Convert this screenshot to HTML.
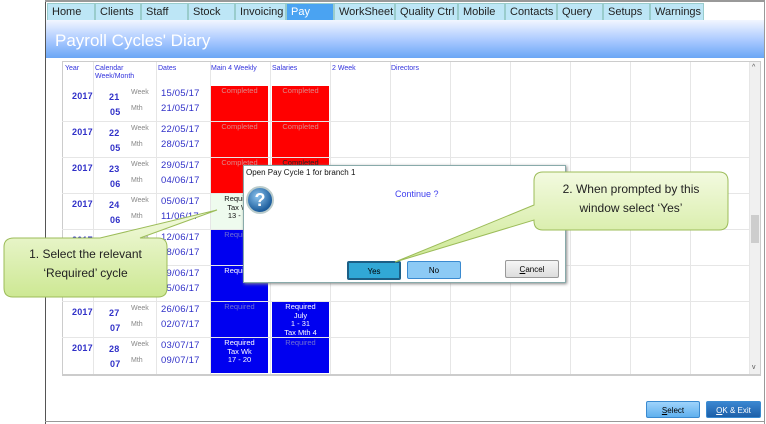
<!DOCTYPE html>
<html><head><style>
*{margin:0;padding:0;box-sizing:border-box}
body{width:766px;height:424px;background:#fff;font-family:"Liberation Sans",sans-serif;position:relative;overflow:hidden}
.a{position:absolute}
.tab{position:absolute;top:3px;height:17px;background:#bde6f6;border:1px solid #9cc;border-bottom:none;font-size:11px;color:#222;padding:2px 0 0 4px;white-space:nowrap;overflow:hidden}
.hdr{left:46px;top:20px;width:718px;height:38px;background:linear-gradient(#f2f6ff,#a8c8ff 55%,#6aa6f5);}
.t{font-size:7px;color:#3333dd}
.g{font-size:7px;color:#888}
.d{font-size:9.5px;color:#3030c8;letter-spacing:0.2px}
.vl{position:absolute;top:62px;width:1px;height:312px;background:#e6e6e6}
.hl{position:absolute;left:62px;width:688px;height:1px;background:#e6e6e6}
.cell{position:absolute;font-size:7.5px;text-align:center;line-height:8.5px;padding-top:1px}
.red{background:#ff0000;color:#d88}
.blue{background:#0000f0;color:#7070d0}
.bw{color:#fff}
.btn{position:absolute;font-size:8px;text-align:center;line-height:17px;border:1px solid #3a8ad0;border-radius:2px}
</style></head><body>
<div class="a" style="left:45px;top:0;width:1px;height:424px;background:#555"></div>
<div class="a" style="left:764px;top:0;width:1px;height:424px;background:#999"></div>
<div class="a" style="left:45px;top:421px;width:720px;height:1px;background:#999"></div>
<div class="a" style="left:45px;top:0;width:720px;height:2px;background:#999"></div>
<div class="tab" style="left:47px;width:48px">Home</div>
<div class="tab" style="left:95px;width:46px">Clients</div>
<div class="tab" style="left:141px;width:47px">Staff</div>
<div class="tab" style="left:188px;width:47px">Stock</div>
<div class="tab" style="left:235px;width:51px">Invoicing</div>
<div class="tab" style="left:286px;width:48px;background:#4aa3f2;color:#fff">Pay</div>
<div class="tab" style="left:334px;width:61px">WorkSheet</div>
<div class="tab" style="left:395px;width:63px">Quality Ctrl</div>
<div class="tab" style="left:458px;width:47px">Mobile</div>
<div class="tab" style="left:505px;width:52px">Contacts</div>
<div class="tab" style="left:557px;width:46px">Query</div>
<div class="tab" style="left:603px;width:47px">Setups</div>
<div class="tab" style="left:650px;width:54px">Warnings</div>
<div class="a hdr"></div>
<div class="a" style="left:55px;top:31px;font-size:17px;color:#fff">Payroll Cycles' Diary</div>
<div class="a" style="left:62px;top:61px;width:699px;height:315px;border:1px solid #ccc;border-bottom:2px solid #ccc"></div>
<div class="a" style="left:750px;top:62px;width:10px;height:312px;background:#f0f0f0"></div>
<div class="a" style="left:751px;top:215px;width:8px;height:28px;background:#cdcdcd"></div>
<div class="a" style="left:752px;top:64px;font-size:7px;color:#555">^</div>
<div class="a" style="left:752px;top:364px;font-size:7px;color:#555">v</div>
<div class="vl" style="left:93px"></div><div class="vl" style="left:156px"></div><div class="vl" style="left:210px"></div><div class="vl" style="left:270px"></div><div class="vl" style="left:330px"></div><div class="vl" style="left:390px"></div><div class="vl" style="left:450px"></div><div class="vl" style="left:510px"></div><div class="vl" style="left:570px"></div><div class="vl" style="left:630px"></div><div class="vl" style="left:690px"></div><div class="vl" style="left:749px"></div>
<div class="hl" style="top:121px"></div><div class="hl" style="top:157px"></div><div class="hl" style="top:193px"></div><div class="hl" style="top:229px"></div><div class="hl" style="top:265px"></div><div class="hl" style="top:301px"></div><div class="hl" style="top:337px"></div>
<div class="a t" style="left:65px;top:65px">Year</div>
<div class="a t" style="left:95px;top:65px;line-height:8px">Calendar<br>Week/Month</div>
<div class="a t" style="left:158px;top:65px">Dates</div>
<div class="a t" style="left:211px;top:65px">Main 4 Weekly</div>
<div class="a t" style="left:272px;top:65px">Salaries</div>
<div class="a t" style="left:332px;top:65px">2 Week</div>
<div class="a t" style="left:391px;top:65px">Directors</div>
<script>
var rows=[["21","05","15/05/17","21/05/17"],["22","05","22/05/17","28/05/17"],["23","06","29/05/17","04/06/17"],["24","06","05/06/17","11/06/17"],["25","06","12/06/17","18/06/17"],["26","06","19/06/17","25/06/17"],["27","07","26/06/17","02/07/17"],["28","07","03/07/17","09/07/17"]];
var h="";
rows.forEach(function(r,i){var y=86+i*36;
h+='<div class="a d" style="left:72px;top:'+(y+5)+'px;font-weight:bold;font-size:9px">2017</div>';
h+='<div class="a d" style="left:109px;top:'+(y+6)+'px;font-weight:bold;font-size:9px">'+r[0]+'</div>';
h+='<div class="a d" style="left:110px;top:'+(y+21)+'px;font-weight:bold;font-size:9px">'+r[1]+'</div>';
h+='<div class="a g" style="left:131px;top:'+(y+3)+'px">Week</div><div class="a g" style="left:131px;top:'+(y+19)+'px">Mth</div>';
h+='<div class="a d" style="left:161px;top:'+(y+2)+'px">'+r[2]+'</div><div class="a d" style="left:161px;top:'+(y+17)+'px">'+r[3]+'</div>';
});
document.write(h);
</script>
<div class="cell red" style="left:211px;top:86px;width:57px;height:35px">Completed</div>
<div class="cell red" style="left:272px;top:86px;width:57px;height:35px">Completed</div>
<div class="cell red" style="left:211px;top:122px;width:57px;height:35px">Completed</div>
<div class="cell red" style="left:272px;top:122px;width:57px;height:35px">Completed</div>
<div class="cell red" style="left:211px;top:158px;width:57px;height:35px">Completed</div>
<div class="cell red" style="left:272px;top:158px;width:57px;height:107px;color:#222">Completed</div>
<div class="cell" style="left:211px;top:194px;width:57px;height:35px;background:#eefbee;color:#111">Required<br>Tax Wk<br>13 - 16</div>
<div class="cell blue" style="left:211px;top:230px;width:57px;height:35px">Required</div>
<div class="cell blue bw" style="left:211px;top:266px;width:57px;height:35px">Required</div>
<div class="cell blue" style="left:211px;top:302px;width:57px;height:35px">Required</div>
<div class="cell blue bw" style="left:272px;top:302px;width:57px;height:35px">Required<br>July<br>1 - 31<br>Tax Mth 4</div>
<div class="cell blue bw" style="left:211px;top:338px;width:57px;height:35px">Required<br>Tax Wk<br>17 - 20</div>
<div class="cell blue" style="left:272px;top:338px;width:57px;height:35px">Required</div>
<div class="a" style="left:243px;top:165px;width:323px;height:118px;background:#fff;border:1px solid #8aa;box-shadow:1px 1px 3px #888"></div>
<div class="a" style="left:246px;top:168px;font-size:8px;color:#111">Open Pay Cycle 1 for branch 1</div>
<div class="a" style="left:246px;top:186px;width:28px;height:28px;border-radius:50%;background:radial-gradient(circle at 40% 35%,#8bc4ee,#1d5d9c 70%);border:2px solid #bcc;color:#fff;font-weight:bold;font-size:18px;text-align:center;line-height:24px">?</div>
<div class="a" style="left:395px;top:189px;font-size:9px;color:#4040ee">Continue ?</div>
<div class="btn" style="left:347px;top:261px;width:54px;height:19px;background:#31a8d6;border:2px solid #1b5f86">Yes</div>
<div class="btn" style="left:407px;top:261px;width:54px;height:18px;background:#8ccaf5">No</div>
<div class="btn" style="left:505px;top:260px;width:54px;height:18px;background:linear-gradient(#f6f6f6,#ddd);border-color:#999"><u>C</u>ancel</div>
<div class="btn" style="left:646px;top:401px;width:54px;height:17px;background:linear-gradient(#9fd3fb,#5fb0ee)"><u>S</u>elect</div>
<div class="btn" style="left:706px;top:401px;width:55px;height:17px;background:linear-gradient(#3a86d0,#1c5fa8);color:#fff"><u>O</u>K &amp; Exit</div>
<svg class="a" style="left:0;top:0" width="766" height="424">
<defs><linearGradient id="cg" x1="0" y1="0" x2="0" y2="1"><stop offset="0" stop-color="#f3fae0"/><stop offset="1" stop-color="#cde893"/></linearGradient></defs>
<path d="M14 238 H100 L217 210 L140 238 H158 Q167 238 167 247 V288 Q167 297 158 297 H13 Q4 297 4 288 V247 Q4 238 14 238 Z" fill="url(#cg)" stroke="#9cbc59" stroke-width="1"/>
<path d="M543 172 H719 Q728 172 728 181 V221 Q728 230 719 230 H543 Q534 230 534 221 V220 L395 262 L534 205 V181 Q534 172 543 172 Z" fill="url(#cg)" stroke="#9cbc59" stroke-width="1"/>
</svg>
<div class="a" style="left:4px;top:245px;width:163px;text-align:center;font-size:12px;line-height:19px;color:#222">1. Select the relevant<br>‘Required’ cycle</div>
<div class="a" style="left:534px;top:180px;width:194px;text-align:center;font-size:12px;line-height:19px;color:#222">2. When prompted by this<br>window select ‘Yes’</div>
</body></html>
